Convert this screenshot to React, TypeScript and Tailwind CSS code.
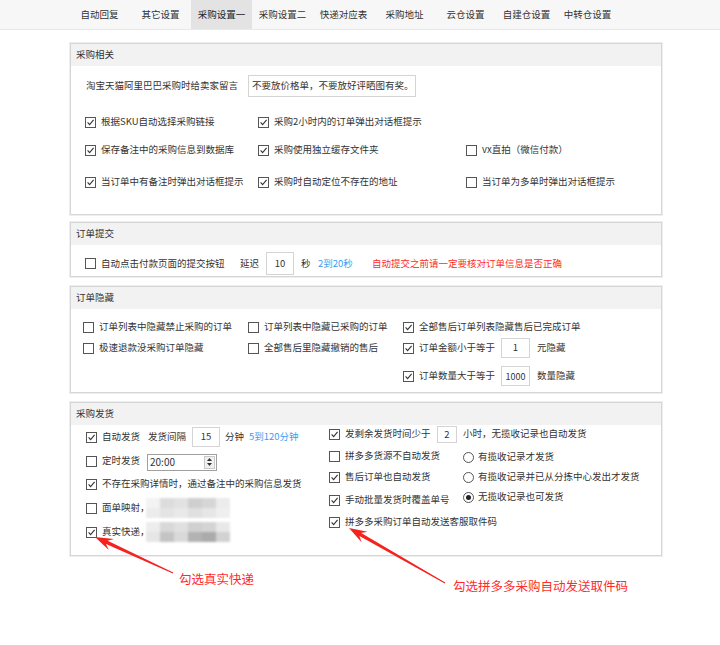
import React from "react";

const Check = ({ on }: { on?: boolean }) => (
  <span className="relative inline-block w-[11px] h-[11px] shrink-0 border border-[#555] bg-white">
    {on && (
      <svg className="absolute left-0 top-0" width="9" height="9" viewBox="0 0 9 9">
        <path d="M1.6 4.4 L3.6 6.6 L7.6 1.9" fill="none" stroke="#333" strokeWidth="1.1" />
      </svg>
    )}
  </span>
);

const Radio = ({ on }: { on?: boolean }) => (
  <span className="inline-flex items-center justify-center w-[11px] h-[11px] shrink-0 rounded-full border border-[#555] bg-white">
    {on && <span className="w-[5px] h-[5px] rounded-full bg-[#222]" />}
  </span>
);

const CB = ({ on, children, className = "" }: { on?: boolean; children: React.ReactNode; className?: string }) => (
  <div className={"flex items-center gap-[5px] whitespace-nowrap " + className}>
    <Check on={on} />
    <span>{children}</span>
  </div>
);

const RB = ({ on, children, className = "" }: { on?: boolean; children: React.ReactNode; className?: string }) => (
  <div className={"flex items-center gap-[4px] whitespace-nowrap " + className}>
    <Radio on={on} />
    <span>{children}</span>
  </div>
);

const Box = ({ children, className = "" }: { children: React.ReactNode; className?: string }) => (
  <div className={"flex items-center justify-center border border-[#d4d4d4] bg-white " + className}>{children}</div>
);

const Section = ({ title, children, className = "" }: { title: string; children: React.ReactNode; className?: string }) => (
  <div className={"border border-[#d6d6d6] shadow-[0_0_0_1px_#eeeeee] bg-white " + className}>
    <div className="h-[22px] bg-[#f2f2f2] flex items-center pl-[5px]">{title}</div>
    {children}
  </div>
);

const mosaicTop = ["#f3f3f3", "#dcdcdc", "#e2e2e2", "#cfcfcf", "#d6d6d6", "#ececec"];
const mosaicBot = ["#e6e6e6", "#c4c4c4", "#d9d9d9", "#b3b3b3", "#ababab", "#d2d2d2"];

const Mosaic = ({ top, bot }: { top: string[]; bot: string[] }) => (
  <div className="ml-[-4px] w-[84px] h-[20px] flex flex-col blur-[1.2px]">
    <div className="flex flex-1">
      {top.map((c, i) => (
        <div key={i} className="flex-1" style={{ background: c }} />
      ))}
    </div>
    <div className="flex flex-1">
      {bot.map((c, i) => (
        <div key={i} className="flex-1" style={{ background: c }} />
      ))}
    </div>
  </div>
);

function arrowPoints(tip: [number, number], tail: [number, number]) {
  const dx = tip[0] - tail[0];
  const dy = tip[1] - tail[1];
  const L = Math.hypot(dx, dy);
  const ux = dx / L, uy = dy / L;
  const nx = -uy, ny = ux;
  const p = (base: [number, number], along: number, side: number) =>
    `${(base[0] + ux * along + nx * side).toFixed(1)},${(base[1] + uy * along + ny * side).toFixed(1)}`;
  return [
    p(tail, 0, 0.5),
    p(tip, -13, 1.8),
    p(tip, -18, 6),
    p(tip, 0, 0),
    p(tip, -18, -6),
    p(tip, -13, -1.8),
    p(tail, 0, -0.5),
  ].join(" ");
}

const tabs = ["自动回复", "其它设置", "采购设置一", "采购设置二", "快递对应表", "采购地址", "云仓设置", "自建仓设置", "中转仓设置"];

export default function App() {
  return (
    <div className="relative w-[720px] h-[645px] bg-white text-[#333] text-[9.5px] leading-none font-['Noto_Sans_CJK_SC','Microsoft_YaHei',sans-serif]">
      {/* tabs */}
      <div className="h-[30px] bg-[#f7f7f7] border-b border-[#e9e9e9] flex pl-[69px]">
        {tabs.map((t, i) => (
          <div
            key={t}
            className={"w-[61px] flex items-center justify-center " + (i === 2 ? "bg-[#e3e3e3] text-[#222]" : "")}
          >
            {t}
          </div>
        ))}
      </div>

      <div className="ml-[70px] mt-[13px] w-[592px] flex flex-col">
        {/* 采购相关 */}
        <Section title="采购相关">
          <div className="h-[148px] pt-[9px] pl-[14px]">
            <div className="flex items-center h-[22px]">
              <span className="ml-[1px] w-[162px] whitespace-nowrap">淘宝天猫阿里巴巴采购时给卖家留言</span>
              <div className="w-[168px] h-[22px] border border-[#d4d4d4] flex items-center pl-[3px] whitespace-nowrap">
                不要放价格单，不要放好评晒图有奖。
              </div>
            </div>
            <div className="mt-[16px] flex h-[18px] items-center">
              <CB on className="w-[173px]">根据SKU自动选择采购链接</CB>
              <CB on className="w-[208px]">采购2小时内的订单弹出对话框提示</CB>
            </div>
            <div className="mt-[10px] flex h-[18px] items-center">
              <CB on className="w-[173px]">保存备注中的采购信息到数据库</CB>
              <CB on className="w-[208px]">采购使用独立缓存文件夹</CB>
              <CB>vx直拍（微信付款）</CB>
            </div>
            <div className="mt-[14px] flex h-[18px] items-center">
              <CB on className="w-[173px]">当订单中有备注时弹出对话框提示</CB>
              <CB on className="w-[208px]">采购时自动定位不存在的地址</CB>
              <CB>当订单为多单时弹出对话框提示</CB>
            </div>
          </div>
        </Section>

        {/* 订单提交 */}
        <Section title="订单提交" className="mt-[7px]">
          <div className="h-[31px] pt-[7px] pl-[14px]">
            <div className="flex items-center h-[23px] whitespace-nowrap">
              <CB className="w-[155px]">自动点击付款页面的提交按钮</CB>
              <span className="w-[26px]">延迟</span>
              <Box className="w-[28px] h-[23px]">10</Box>
              <span className="ml-[7px] w-[17px]">秒</span>
              <span className="w-[54px] text-[#3d9cf0]">2到20秒</span>
              <span className="text-[#ff2a2a]">自动提交之前请一定要核对订单信息是否正确</span>
            </div>
          </div>
        </Section>

        {/* 订单隐藏 */}
        <Section title="订单隐藏" className="mt-[9px]">
          <div className="h-[83px] pl-[12px] flex">
            <div className="w-[165px] flex flex-col">
              <CB className="mt-[9px] h-[18px]">订单列表中隐藏禁止采购的订单</CB>
              <CB className="mt-[2px] h-[20px]">极速退款没采购订单隐藏</CB>
            </div>
            <div className="w-[155px] flex flex-col">
              <CB className="mt-[9px] h-[18px]">订单列表中隐藏已采购的订单</CB>
              <CB className="mt-[2px] h-[20px]">全部售后里隐藏撤销的售后</CB>
            </div>
            <div className="flex flex-col">
              <CB on className="mt-[9px] h-[18px]">全部售后订单列表隐藏售后已完成订单</CB>
              <div className="mt-[2px] h-[20px] flex items-center whitespace-nowrap">
                <CB on className="w-[98px]">订单金额小于等于</CB>
                <Box className="w-[29px] h-[20px]">1</Box>
                <span className="ml-[7px]">元隐藏</span>
              </div>
              <div className="mt-[8px] h-[20px] flex items-center whitespace-nowrap">
                <CB on className="w-[98px]">订单数量大于等于</CB>
                <Box className="w-[29px] h-[20px] text-[9px]">1000</Box>
                <span className="ml-[7px]">数量隐藏</span>
              </div>
            </div>
          </div>
        </Section>

        {/* 采购发货 */}
        <Section title="采购发货" className="mt-[9px]">
          <div className="h-[130px] flex">
            <div className="w-[258px] pl-[15px] flex flex-col">
              <div className="mt-[2px] h-[20px] flex items-center whitespace-nowrap">
                <CB on className="w-[62px]">自动发货</CB>
                <span className="w-[44px]">发货间隔</span>
                <Box className="w-[28px] h-[20px]">15</Box>
                <span className="ml-[5px]">分钟</span>
                <span className="ml-[5px] text-[#3d9cf0]">5到120分钟</span>
              </div>
              <div className="mt-[4px] h-[20px] flex items-center whitespace-nowrap">
                <CB className="w-[61px]">定时发货</CB>
                <div className="w-[70px] h-[17px] mt-[2px] border border-[#a0a0a0] bg-white flex items-center">
                  <span className="flex-1 pl-[2px] text-[10px]">20:00</span>
                  <div className="w-[11px] h-[13px] mr-[1px] border border-[#c8c8c8] bg-[#f0f0f0] flex flex-col items-center justify-around">
                    <svg width="5" height="3" viewBox="0 0 5 3"><path d="M0 3 L2.5 0 L5 3Z" fill="#333" /></svg>
                    <svg width="5" height="3" viewBox="0 0 5 3"><path d="M0 0 L2.5 3 L5 0Z" fill="#333" /></svg>
                  </div>
                </div>
              </div>
              <CB on className="mt-[3px] h-[20px]">不存在采购详情时，通过备注中的采购信息发货</CB>
              <div className="mt-[4px] h-[20px] flex items-center">
                <CB>面单映射，</CB>
                <Mosaic top={mosaicTop} bot={["#ececec", "#e4e4e4", "#e9e9e9", "#e0e0e0", "#e6e6e6", "#efefef"]} />
              </div>
              <div className="mt-[4px] h-[20px] flex items-center">
                <CB on>真实快递，</CB>
                <Mosaic top={["#ededed", "#d8d8d8", "#e0e0e0", "#d0d0d0", "#d4d4d4", "#e8e8e8"]} bot={mosaicBot} />
              </div>
            </div>
            <div className="flex flex-col">
              <div className="h-[18px] flex items-center whitespace-nowrap">
                <CB on className="w-[108px]">发剩余发货时间少于</CB>
                <Box className="w-[20px] h-[17px] mt-[1px]">2</Box>
                <span className="ml-[6px]">小时，无揽收记录也自动发货</span>
              </div>
              <div className="flex">
                <div className="w-[134px] flex flex-col">
                  <CB className="mt-[4px] h-[18px]">拼多多货源不自动发货</CB>
                  <CB on className="mt-[3px] h-[18px]">售后订单也自动发货</CB>
                  <CB on className="mt-[5px] h-[18px]">手动批量发货时覆盖单号</CB>
                  <CB on className="mt-[4px] h-[18px]">拼多多采购订单自动发送客服取件码</CB>
                </div>
                <div className="flex flex-col">
                  <RB className="mt-[5px] h-[18px]">有揽收记录才发货</RB>
                  <RB className="mt-[2px] h-[18px]">有揽收记录并已从分拣中心发出才发货</RB>
                  <RB on className="mt-[2px] h-[18px]">无揽收记录也可发货</RB>
                </div>
              </div>
            </div>
          </div>
        </Section>
      </div>

      {/* annotations */}
      <svg className="absolute left-0 top-0 pointer-events-none" width="720" height="645">
        <polygon points={arrowPoints([95, 537], [173, 573])} fill="#f4231f" />
        <polygon points={arrowPoints([349, 528], [445, 583])} fill="#f4231f" />
      </svg>
      <div className="absolute left-[179px] top-[571px] text-[12.5px] leading-[16px] text-[#ff2b2b] whitespace-nowrap">
        勾选真实快递
      </div>
      <div className="absolute left-[453px] top-[578px] text-[12.5px] leading-[16px] text-[#ff2b2b] whitespace-nowrap">
        勾选拼多多采购自动发送取件码
      </div>
    </div>
  );
}
